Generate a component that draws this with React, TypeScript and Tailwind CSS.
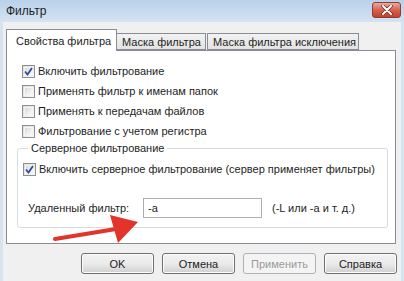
import type { ReactNode } from "react";

function Checkbox({ checked }: { checked?: boolean }) {
  return (
    <span className="relative w-[13px] h-[13px] shrink-0 border border-[#8e8f8f] bg-gradient-to-br from-[#dcdcdc] to-[#f9f9f9] flex items-center justify-center">
      <span className="absolute inset-[1px] border border-[#f4f4f4] bg-gradient-to-br from-[#d8d8d8] via-[#ececec] to-[#fafafa]" />
      {checked && (
        <svg width="9" height="9" viewBox="0 0 9 9" className="relative">
          <path d="M1 4.5 L3.5 7.5 L8 1" fill="none" stroke="#2b4d9c" strokeWidth="1.8" />
        </svg>
      )}
    </span>
  );
}

function CheckRow({ checked, children }: { checked?: boolean; children: ReactNode }) {
  return (
    <div className="h-[20px] flex items-center gap-[3px] whitespace-nowrap">
      <Checkbox checked={checked} />
      <span>{children}</span>
    </div>
  );
}

function Button({ label, disabled }: { label: string; disabled?: boolean }) {
  return (
    <button
      className={
        disabled
          ? "w-[73px] h-[21px] rounded-[3px] border border-[#adb2b5] bg-[#f4f4f4] text-[#9a9a9a] font-normal"
          : "w-[73px] h-[21px] rounded-[3px] border border-[#707070] bg-gradient-to-b from-[#f2f2f2] via-[#ebebeb] to-[#d0d0d0] text-[#222] font-normal shadow-[inset_0_0_0_1px_#fcfcfc]"
      }
    >
      {label}
    </button>
  );
}

export default function App() {
  return (
    <div className="relative w-[404px] h-[281px] overflow-hidden bg-[#f0f0f0] text-[11px] leading-[14px] text-[#1e1e1e] whitespace-nowrap font-['Liberation_Sans',sans-serif]">
      {/* Заголовок */}
      <div className="h-[22px] flex items-center justify-between pl-[6px] pr-[3px] bg-gradient-to-b from-[#b9d1ea] to-[#d5e3f2]">
        <span className="text-[12px]">Фильтр</span>
        <div className="w-[29px] h-[16px] mt-[-2px] rounded-[3px] border border-[#8d3f34] bg-gradient-to-b from-[#e9a99b] via-[#d4624f] to-[#c3402c] flex items-center justify-center">
          <svg width="12" height="10" viewBox="0 0 12 10">
            <path d="M2 1 L10 9 M10 1 L2 9" stroke="#6a2a22" strokeWidth="3.4" strokeLinecap="round" />
            <path d="M2 1 L10 9 M10 1 L2 9" stroke="#ffffff" strokeWidth="2" strokeLinecap="round" />
          </svg>
        </div>
      </div>

      {/* Тело окна */}
      <div className="h-[259px] border-x-[3px] border-[#d6e3f1] pl-[3px] pr-[4px] pt-[8px]">
        {/* Вкладки */}
        <div className="flex items-end h-[20px]">
          <div className="relative z-10 w-[111px] h-[22px] -mb-[1px] border border-b-0 border-[#898c95] bg-white pl-[9px] pt-[4px]">
            Свойства фильтра
          </div>
          <div className="w-[89px] h-[17px] border border-l-0 border-[#898c95] bg-gradient-to-b from-[#f2f2f2] to-[#e3e3e3] pl-[5px] pt-[1px]">
            Маска фильтра
          </div>
          <div className="w-[152px] h-[17px] border border-[#898c95] bg-gradient-to-b from-[#f2f2f2] to-[#e3e3e3] pl-[5px] pt-[1px] ml-[1px]">
            Маска фильтра исключения
          </div>
        </div>

        {/* Панель */}
        <div className="w-[390px] h-[194px] border border-[#898c95] bg-white pt-[10px] pl-[15px] pr-[7px]">
          <CheckRow checked>Включить фильтрование</CheckRow>
          <CheckRow>Применять фильтр к именам папок</CheckRow>
          <CheckRow>Применять к передачам файлов</CheckRow>
          <CheckRow>Фильтрование с учетом регистра</CheckRow>

          <fieldset className="-ml-[5px] border border-[#d3dde3] rounded-[3px] pl-[5px] pb-[9px]">
            <legend className="ml-[5px] px-[3px]">Серверное фильтрование</legend>
            <div className="mt-[4px]">
              <CheckRow checked>Включить серверное фильтрование (сервер применяет фильтры)</CheckRow>
            </div>
            <div className="mt-[19px] flex items-center h-[20px] pl-[5px]">
              <span className="w-[115px]">Удаленный фильтр:</span>
              <div className="w-[119px] h-[20px] border border-[#abadb3] bg-white pl-[4px] flex items-center">-a</div>
              <span className="ml-[10px]">(-L или -a и т. д.)</span>
            </div>
          </fieldset>
        </div>

        {/* Кнопки */}
        <div className="mt-[9px] flex justify-end gap-[8px]">
          <Button label="OK" />
          <Button label="Отмена" />
          <Button label="Применить" disabled />
          <Button label="Справка" />
        </div>
      </div>

      {/* Красная стрелка */}
      <svg className="absolute left-0 top-0 pointer-events-none" width="404" height="281" viewBox="0 0 404 281">
        <path d="M55 239 L122 228" stroke="#e2342a" strokeWidth="4" strokeLinecap="round" />
        <path d="M138 222 L110 215 L118 243 Z" fill="#e2342a" />
      </svg>
    </div>
  );
}
